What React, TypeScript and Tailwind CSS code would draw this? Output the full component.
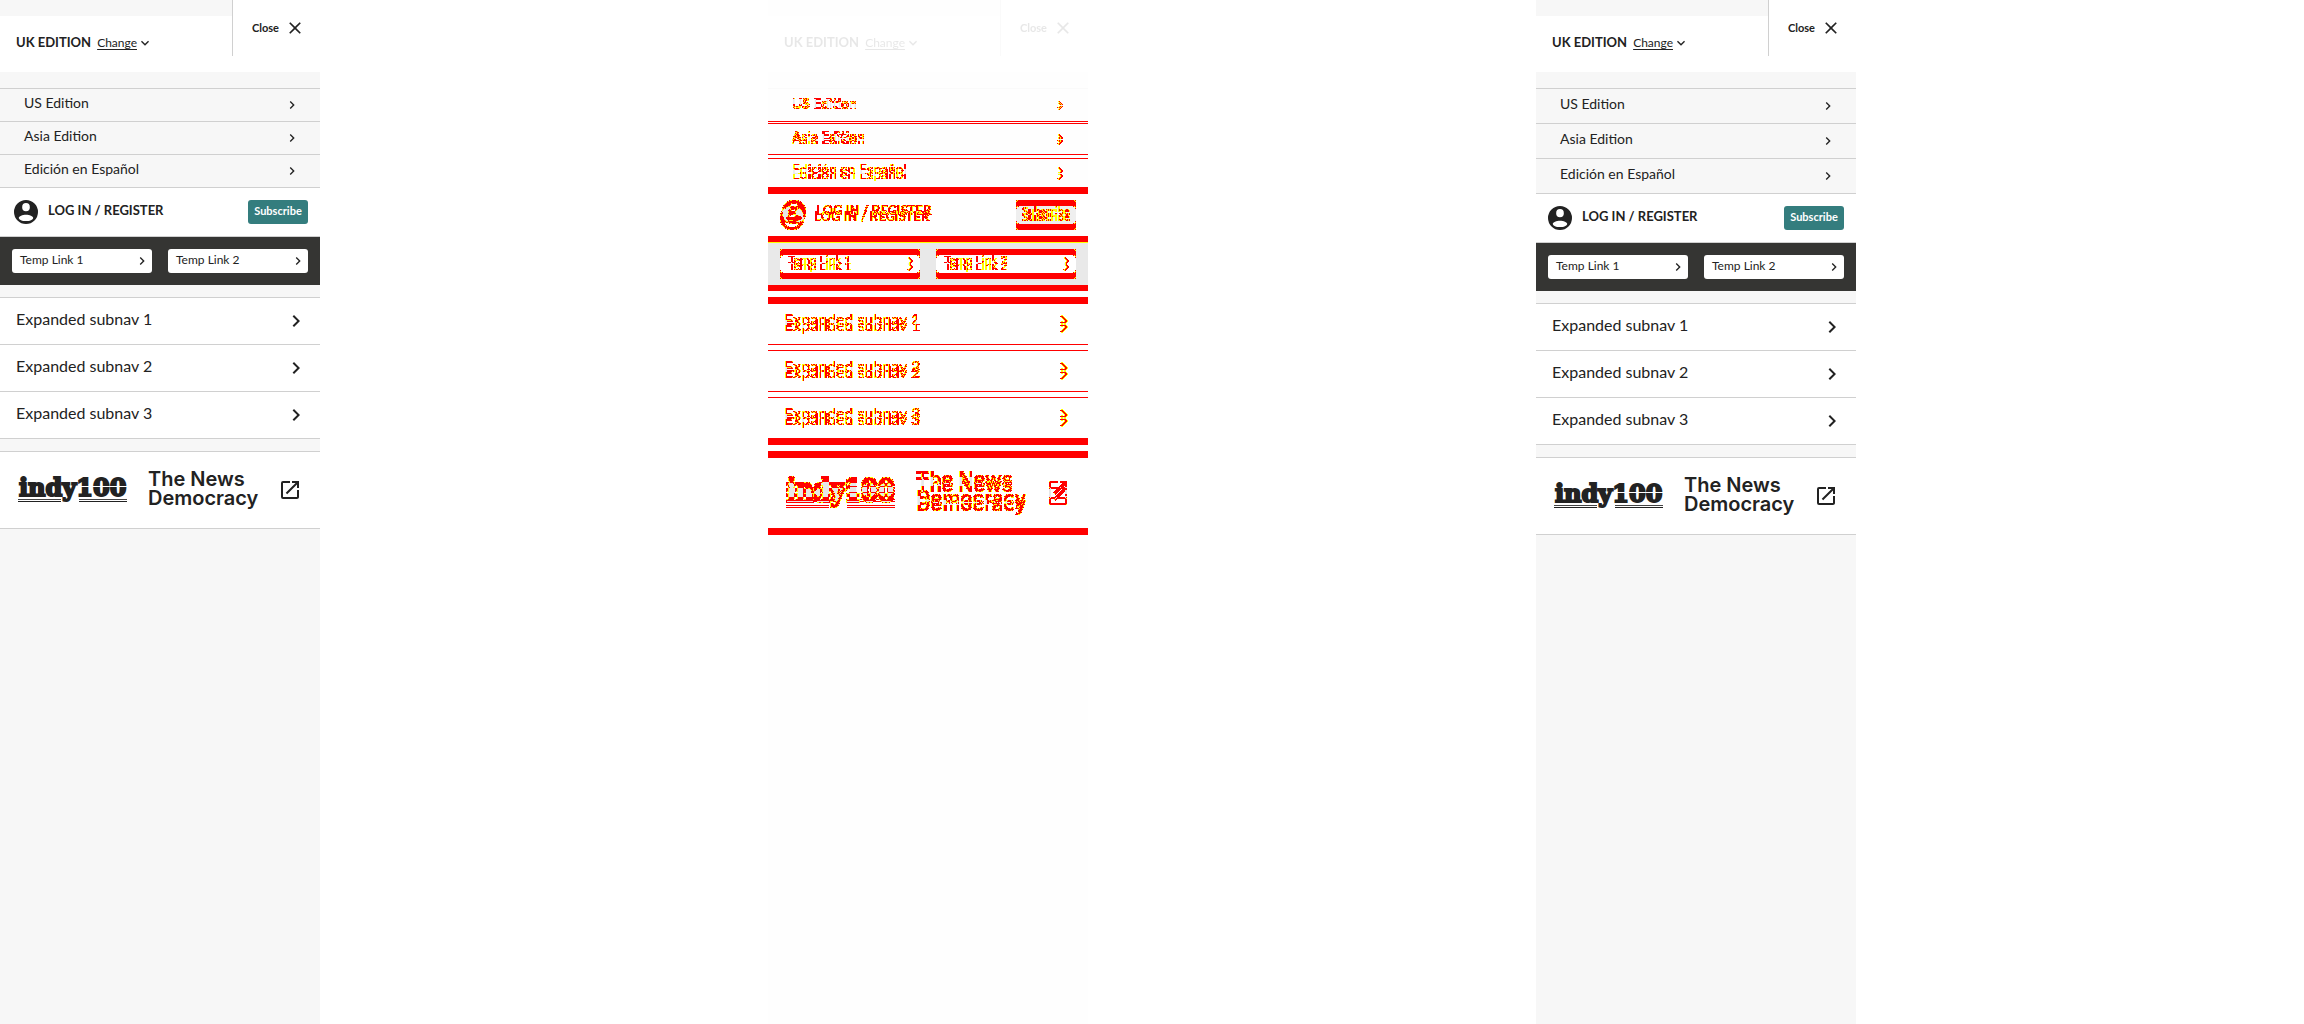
import { MdChevronRight, MdClose, MdExpandMore, MdOpenInNew } from "react-icons/md";

type Variant = "before" | "after";

const EDITIONS = ["US Edition", "Asia Edition", "Edición en Español"];
const TEMP_LINKS = ["Temp Link 1", "Temp Link 2"];
const SUBNAVS = ["Expanded subnav 1", "Expanded subnav 2", "Expanded subnav 3"];

function AccountIcon() {
  return (
    <svg viewBox="2 2 20 20" className="size-6 shrink-0" aria-hidden="true">
      <path
        fill="currentColor"
        fillRule="evenodd"
        d="M12 2a10 10 0 1 0 0 20 10 10 0 0 0 0-20zM12 4.600a3.200 3.400 0 1 1 0 6.800 3.200 3.400 0 0 1 0-6.800zM12 14.200c3 0 6 1.200 6 2.700 0 1.400-3 2.700-6 2.700s-6-1.300-6-2.700c0-1.500 3-2.700 6-2.700z"
      />
    </svg>
  );
}

function IndyLogo() {
  return (
    <svg viewBox="0 0 112 36" className="h-9 w-28 shrink-0" role="img" aria-label="indy100">
      <text
        x="1"
        y="24"
        fontFamily="'DejaVu Serif', serif"
        fontWeight="700"
        fontSize="24"
        fill="#222222"
        stroke="#222222"
        strokeWidth="2"
      >
        indy100
      </text>
      <path d="M62 14.500H111" stroke="#ffffff" strokeWidth="1" />
      <path d="M0 27.500H43M61 27.500H109" stroke="#444444" strokeWidth="1" />
      <path d="M0 29.500H43M61 29.500H109" stroke="#222222" strokeWidth="1" />
    </svg>
  );
}

function MenuHeader() {
  return (
    <header className="flex h-[72px] bg-white text-xs">
      <div className="flex flex-1 flex-col">
        <div className="h-4 bg-[#f7f7f7]" />
        <div className="flex flex-1 items-center pb-0.5 pl-4">
          <span className="text-[13px] font-bold">UK EDITION</span>
          <button type="button" className="ml-1.5 flex items-center underline underline-offset-2">
            Change
            <MdExpandMore className="size-4" />
          </button>
        </div>
      </div>
      <button
        type="button"
        className="flex h-14 w-[88px] items-center justify-end gap-1.5 border-l border-[#d0d0d0] pr-[15px] text-[11px] font-bold"
      >
        Close
        <MdClose className="size-5" />
      </button>
    </header>
  );
}

function Menu({ variant, header = true }: { variant: Variant; header?: boolean }) {
  const after = variant === "after";
  return (
    <nav className="h-full w-full bg-[#f7f7f7] font-['Lato',sans-serif] text-[#222222]">
      {header ? <MenuHeader /> : <div className="h-[72px] bg-white" />}
      <ul className="mt-4 border-t border-[#d0d0d0] text-sm">
        {EDITIONS.map((name) => (
          <li key={name} className="border-b border-[#d0d0d0]">
            <a href="#" className={`flex items-center justify-between pr-5 pl-6 ${after ? "h-[34px]" : "h-8"}`}>
              <span className="pb-1">{name}</span>
              <MdChevronRight className="size-4" />
            </a>
          </li>
        ))}
      </ul>
      <div
        className={`flex h-[49px] items-center border-b border-[#d0d0d0] bg-white pr-3 ${after ? "pl-3" : "pl-3.5"}`}
      >
        <a href="#" className="flex items-center gap-2.5 text-[13px] font-bold">
          <AccountIcon />
          <span className="pb-0.5">LOG IN / REGISTER</span>
        </a>
        <button
          type="button"
          className="ml-auto h-6 w-[60px] rounded-[3px] bg-[#347d7e] pb-0.5 text-[11px] font-bold text-white"
        >
          Subscribe
        </button>
      </div>
      <div className="grid grid-cols-2 gap-4 bg-[#353533] p-3">
        {TEMP_LINKS.map((name) => (
          <a
            key={name}
            href="#"
            className="flex h-6 items-center justify-between rounded-[3px] bg-white pr-0.5 pl-2 text-xs"
          >
            <span className="pb-0.5">{name}</span>
            <MdChevronRight className="size-4" />
          </a>
        ))}
      </div>
      <ul className="mt-3 border-t border-[#d0d0d0] bg-white text-base">
        {SUBNAVS.map((name) => (
          <li key={name} className="border-b border-[#d0d0d0]">
            <a href="#" className="flex h-[46px] items-center justify-between pr-3 pl-4">
              <span className="pb-1">{name}</span>
              <MdChevronRight className="size-6" />
            </a>
          </li>
        ))}
      </ul>
      <div className="mt-3 flex h-[78px] items-center border-y border-[#d0d0d0] bg-white pr-[18px] pl-[18px]">
        <a href="#">
          <IndyLogo />
        </a>
        <a
          href="#"
          className="ml-[18px] pb-0.5 font-['Inter',sans-serif] text-xl leading-[19px] font-semibold whitespace-nowrap"
        >
          The News
          <br />
          Democracy
        </a>
        <MdOpenInNew className="ml-auto size-6 shrink-0" />
      </div>
    </nav>
  );
}

/* Turns the per-pixel difference of two layers into red and yellow marks. */
function MarkFilter() {
  return (
    <svg className="absolute size-0" aria-hidden="true">
      <filter id="marks" x="0" y="0" width="1" height="1" colorInterpolationFilters="sRGB">
        <feColorMatrix type="matrix" values="1 0 0 0 0  1 0 0 0 0  0 0 0 0 0  1 0 0 0 0" result="d" />
        <feComponentTransfer result="red">
          <feFuncR type="discrete" tableValues="1 1" />
          <feFuncG type="discrete" tableValues="0 0" />
          <feFuncB type="discrete" tableValues="0 0" />
          <feFuncA
            type="discrete"
            tableValues="0 1 1 1 1 1 1 1 1 1 1 1 1 1 1 1 1 1 1 1 1 1 1 1 1 1 1 1 1 1 1 1"
          />
        </feComponentTransfer>
        <feComponentTransfer in="d">
          <feFuncR type="discrete" tableValues="1 1" />
          <feFuncG type="discrete" tableValues="1 1" />
          <feFuncB type="discrete" tableValues="0 0" />
          <feFuncA type="discrete" tableValues="0 0 0 0 1 1 1 1 1 1 1 0 0 0 0 0" />
        </feComponentTransfer>
        <feComposite in2="red" operator="over" />
      </filter>
    </svg>
  );
}

function Difference() {
  return (
    <div className="relative h-full w-80" inert>
      <div className="h-full opacity-10 grayscale">
        <Menu variant="before" />
      </div>
      <div className="absolute inset-0 isolate [filter:url(#marks)]" aria-hidden="true">
        <Menu variant="before" header={false} />
        <div className="absolute inset-0 mix-blend-difference">
          <Menu variant="after" header={false} />
        </div>
      </div>
    </div>
  );
}

export default function App() {
  return (
    <main className="grid h-screen grid-cols-3 overflow-hidden bg-white">
      <MarkFilter />
      <section aria-label="Before">
        <div className="h-full w-80">
          <Menu variant="before" />
        </div>
      </section>
      <section aria-label="Difference">
        <Difference />
      </section>
      <section aria-label="After">
        <div className="h-full w-80">
          <Menu variant="after" />
        </div>
      </section>
    </main>
  );
}
